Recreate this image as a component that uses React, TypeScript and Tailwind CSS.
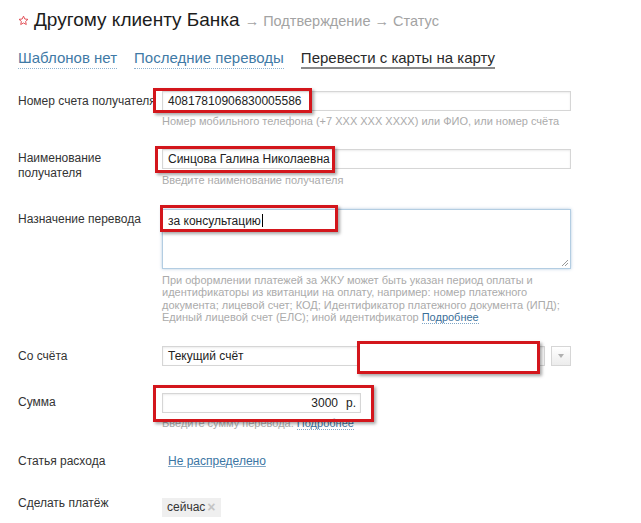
import React from 'react';

const LABEL = 'w-[144px] shrink-0 text-[12px] leading-[15px] text-[#333]';
const INPUT = 'h-[20px] border border-[#d6d6d6] shadow-[inset_0_1px_2px_rgba(0,0,0,0.08)] bg-white px-[5px] text-[12px] leading-[18px] text-[#222]';
const HINT = 'text-[11px] leading-[12.5px] text-[#ababab]';
const LINK = 'text-[#3a75a3]';

function Star() {
  return (
    <svg width="11" height="11" viewBox="0 0 24 24" className="mr-[5px] self-center">
      <path d="M12 2.5l2.9 6.3 6.8.7-5.1 4.6 1.5 6.7L12 17.4l-6.1 3.4 1.5-6.7-5.1-4.6 6.8-.7z" fill="none" stroke="#e0444c" strokeWidth="2" strokeLinejoin="round" />
    </svg>
  );
}

/** Red annotation frame drawn over the form. */
function Mark({ x, y, w, h, fill }: { x: number; y: number; w: number; h: number; fill?: boolean }) {
  return (
    <div
      className={`absolute border-[3px] border-[#d3161c] shadow-[2px_2px_3px_rgba(0,0,0,0.35)] ${fill ? 'bg-white' : ''}`}
      style={{ left: x, top: y, width: w, height: h }}
    />
  );
}

export default function App() {
  return (
    <div className="relative h-[523px] w-[641px] overflow-hidden bg-white pl-[18px] font-['Liberation_Sans',Arial,sans-serif]">
      <div className="flex items-baseline pt-[8px]">
        <Star />
        <span className="text-[19px] leading-[23px] text-[#1c1c1c]">Другому клиенту Банка</span>
        <span className="ml-[5px] text-[14.5px] text-[#a3a3a3]">→ Подтверждение → Статус</span>
      </div>

      <div className="mt-[16px] flex gap-[17px] text-[15px] leading-[18px]">
        <span className="border-b border-dotted border-[#8fb3cf] text-[#3f7aa6]">Шаблонов нет</span>
        <span className="border-b border-dotted border-[#8fb3cf] text-[#3f7aa6]">Последние переводы</span>
        <span className="border-b-2 border-[#8a8a8a] text-[#2a2a2a]">Перевести с карты на карту</span>
      </div>

      <div className="mt-[22px] flex">
        <div className={`${LABEL} pt-[3px]`}>Номер счета получателя</div>
        <div className="w-[409px]">
          <div className={INPUT}>40817810906830005586</div>
          <div className={`${HINT} mt-[4px]`}>Номер мобильного телефона (+7 XXX XXX XXXX) или ФИО, или номер счёта</div>
        </div>
      </div>

      <div className="mt-[22px] flex">
        <div className={`${LABEL} pt-[2px]`}>Наименование<br />получателя</div>
        <div className="w-[409px]">
          <div className={INPUT}>Синцова Галина Николаевна</div>
          <div className={`${HINT} mt-[5px]`}>Введите наименование получателя</div>
        </div>
      </div>

      <div className="mt-[22px] flex">
        <div className={`${LABEL} pt-[3px]`}>Назначение перевода</div>
        <div className="w-[409px]">
          <div className="relative h-[60px] border border-[#b3cde2] bg-white px-[5px] pt-[2px] text-[12px] leading-[15px] text-[#222] shadow-[0_0_3px_rgba(90,140,190,0.45)]">
            <span>за консультацию</span>
            <span className="ml-[1px] inline-block h-[13px] w-px translate-y-[2px] bg-black" />
            <svg width="8" height="8" viewBox="0 0 8 8" className="absolute bottom-[1px] right-[1px]">
              <path d="M7 1L1 7M7 4L4 7" stroke="#999" strokeWidth="1" />
            </svg>
          </div>
          <div className={`${HINT} mt-[5px]`}>
            При оформлении платежей за ЖКУ может быть указан период оплаты и<br />
            идентификаторы из квитанции на оплату, например: номер платежного<br />
            документа; лицевой счет; КОД; Идентификатор платежного документа (ИПД);<br />
            Единый лицевой счет (ЕЛС); иной идентификатор{' '}
            <span className="border-b border-dotted border-[#7fa6c6] text-[#3a6f99]">Подробнее</span>
          </div>
        </div>
      </div>

      <div className="mt-[22px] flex">
        <div className={`${LABEL} pt-[3px]`}>Со счёта</div>
        <div className="flex w-[409px] gap-[6px]">
          <div className={`${INPUT} flex-1`}>Текущий счёт</div>
          <div className="flex h-[20px] w-[20px] items-center justify-center border border-[#d6d6d6] bg-gradient-to-b from-white to-[#ececec]">
            <svg width="6" height="4" viewBox="0 0 6 4"><path d="M0 0h6L3 4z" fill="#b0b0b0" /></svg>
          </div>
        </div>
      </div>

      <div className="mt-[27px] flex">
        <div className={`${LABEL} pt-[2px]`}>Сумма</div>
        <div className="w-[409px]">
          <div className={`${INPUT} flex w-[199px] justify-end gap-[8px] pr-[4px]`}>
            <span>3000</span>
            <span>р.</span>
          </div>
          <div className={`${HINT} mt-[4px]`}>
            Введите сумму перевода. <span className="border-b border-dotted border-[#7fa6c6] text-[#3a6f99]">Подробнее</span>
          </div>
        </div>
      </div>

      <div className="mt-[25px] flex">
        <div className={LABEL}>Статья расхода</div>
        <div className="w-[409px] pl-[6px] text-[12px] leading-[15px]">
          <span className={`${LINK} underline decoration-[#7fa6c6]`}>Не распределено</span>
        </div>
      </div>

      <div className="mt-[25px] flex">
        <div className={`${LABEL} pt-[2px]`}>Сделать платёж</div>
        <div className="w-[409px]">
          <span className="inline-flex h-[19px] items-center gap-[2px] bg-[#efefef] px-[5px] text-[12px] text-[#333]">
            сейчас
            <span className="text-[14px] font-bold leading-none text-[#c4c4c4]">×</span>
          </span>
        </div>
      </div>

      <Mark x={153} y={88} w={159} h={25} />
      <Mark x={155} y={146} w={180} h={27} />
      <Mark x={160} y={205} w={178} h={27} />
      <Mark x={357} y={341} w={183} h={33} fill />
      <Mark x={153} y={385} w={221} h={37} />
    </div>
  );
}
